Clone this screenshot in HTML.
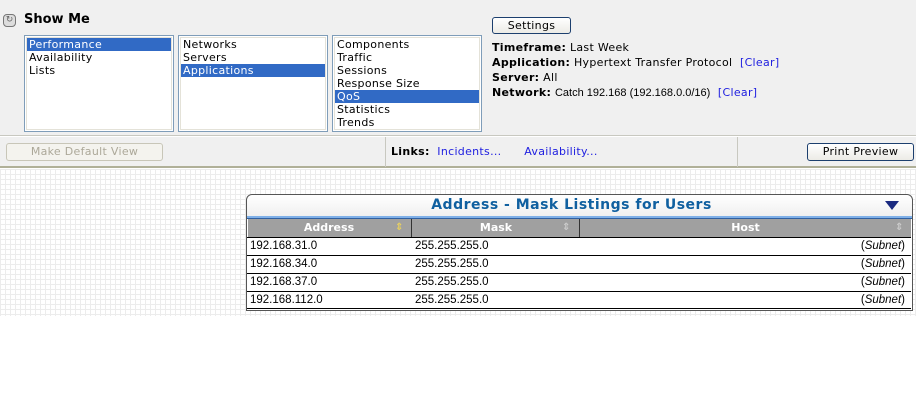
<!DOCTYPE html>
<html><head><style>
*{margin:0;padding:0;box-sizing:border-box}
body{width:916px;height:420px;background:#fff;font-family:"DejaVu Sans",Verdana,sans-serif;font-size:11px;color:#000;position:relative;overflow:hidden}
.abs{position:absolute}
#top{left:0;top:0;width:916px;height:136px;background:#f0f0f0;border-bottom:1px solid #c8c8c0}
#bar{left:0;top:137px;width:916px;height:31px;background:#f0f0f0;border-bottom:2px solid #b0b098}
.lb{top:35px;width:150px;height:97px;border:1px solid #7f9db9;outline:1px solid #e4e2d8;outline-offset:-3px;background:#fff;padding:2px}
.lb div{height:13px;line-height:13px;padding-left:2px;white-space:nowrap;letter-spacing:0.3px}
.sel{background:#316ac5;color:#fff}
#grid{left:0;top:169px;width:916px;height:147px;background-color:#fff;background-image:linear-gradient(#ececec 1px,transparent 1px),linear-gradient(90deg,#ececec 1px,transparent 1px);background-size:5px 5px}
.btn{border:1px solid #1c3f6e;border-radius:3px;background:linear-gradient(#fff,#ecebe6);text-align:center;font-size:11px;letter-spacing:0.3px}
a{color:#2020e0;text-decoration:none}
.info div{height:15px;line-height:15px;white-space:nowrap;letter-spacing:0.3px}
.row{position:absolute;left:0;width:664px;height:18px;border-top:1px solid #000;line-height:17px;font-family:"Liberation Sans",sans-serif;font-size:11.5px}
.row span{position:absolute}
</style></head><body>
<div id="top" class="abs"></div>
<div class="abs" style="left:3px;top:14px;width:13px;height:13px;border:1px solid #777;border-radius:4px;background:#ddd;font-size:9px;line-height:11px;text-align:center;color:#666">↻</div>
<div class="abs" style="left:24px;top:12px;font-weight:bold;font-size:13px">Show Me</div>
<div class="abs lb" style="left:24px"><div class="sel">Performance</div><div>Availability</div><div>Lists</div></div>
<div class="abs lb" style="left:178px"><div>Networks</div><div>Servers</div><div class="sel">Applications</div></div>
<div class="abs lb" style="left:332px"><div>Components</div><div>Traffic</div><div>Sessions</div><div>Response Size</div><div class="sel">QoS</div><div>Statistics</div><div>Trends</div></div>
<div class="abs btn" style="left:492px;top:17px;width:79px;height:17px;line-height:15px">Settings</div>
<div class="abs info" style="left:492px;top:40px">
<div><b>Timeframe:</b> Last Week</div>
<div><b>Application:</b> Hypertext Transfer Protocol &nbsp;<a>[Clear]</a></div>
<div><b>Server:</b> All</div>
<div><b>Network:</b> <span style="font-family:'Liberation Sans',sans-serif;letter-spacing:0">Catch 192.168 (192.168.0.0/16)</span> &nbsp;<a>[Clear]</a></div>
</div>
<div id="bar" class="abs"></div>
<div class="abs" style="left:385px;top:137px;width:1px;height:30px;background:#c8c8c0"></div>
<div class="abs" style="left:737px;top:137px;width:1px;height:30px;background:#c8c8c0"></div>
<div class="abs" style="left:6px;top:143px;width:157px;height:18px;border:1px solid #c8c6b8;border-radius:3px;background:#f4f3ee;color:#aca899;text-align:center;line-height:16px;letter-spacing:0.3px">Make Default View</div>
<div class="abs" style="left:391px;top:145px;letter-spacing:0.3px"><b>Links:</b>&nbsp; <a>Incidents...</a> &nbsp; &nbsp; &nbsp;<a>Availability...</a></div>
<div class="abs btn" style="left:807px;top:143px;width:107px;height:18px;line-height:16px">Print Preview</div>
<div id="grid" class="abs"></div>
<div class="abs" style="left:246px;top:194px;width:667px;height:117px;border:1px solid #555;border-radius:6px 6px 0 0;background:#fff">
<div class="abs" style="left:0;top:0;width:665px;height:21px;background:linear-gradient(#fff,#f0f0f0);border-radius:6px 6px 0 0;text-align:center;color:#1060a0;font-weight:bold;font-size:14px;line-height:20px;letter-spacing:0.5px;padding-right:16px">Address - Mask Listings for Users</div>
<div class="abs" style="left:638px;top:6px;width:0;height:0;border-left:7px solid transparent;border-right:7px solid transparent;border-top:9px solid #1a2a80"></div>
<div class="abs" style="left:0;top:21px;width:665px;height:3px;background:#7fb0e8;border-bottom:1px solid #3060a0"></div>
<div class="abs" style="left:1px;top:24px;width:663px;height:18px;background:#a0a0a0;color:#fff;font-weight:bold;line-height:18px">
<span class="abs" style="left:0;width:162px;text-align:center">Address</span>
<span class="abs" style="left:147px;top:0;color:#e8d060;font-size:10px">⇕</span>
<span class="abs" style="left:163px;width:1px;height:18px;background:#333"></span>
<span class="abs" style="left:164px;width:168px;text-align:center">Mask</span>
<span class="abs" style="left:314px;color:#ccc;font-size:10px">⇕</span>
<span class="abs" style="left:331px;width:1px;height:18px;background:#333"></span>
<span class="abs" style="left:332px;width:331px;text-align:center">Host</span>
<span class="abs" style="left:647px;color:#ccc;font-size:10px">⇕</span>
</div>
<div class="row" style="top:42px"><span style="left:3px">192.168.31.0</span><span style="left:168px">255.255.255.0</span><span style="right:6px">(<i>Subnet</i>)</span></div>
<div class="row" style="top:60px"><span style="left:3px">192.168.34.0</span><span style="left:168px">255.255.255.0</span><span style="right:6px">(<i>Subnet</i>)</span></div>
<div class="row" style="top:78px"><span style="left:3px">192.168.37.0</span><span style="left:168px">255.255.255.0</span><span style="right:6px">(<i>Subnet</i>)</span></div>
<div class="row" style="top:96px;border-bottom:1px solid #000"><span style="left:3px">192.168.112.0</span><span style="left:168px">255.255.255.0</span><span style="right:6px">(<i>Subnet</i>)</span></div>
</div>
</body></html>
